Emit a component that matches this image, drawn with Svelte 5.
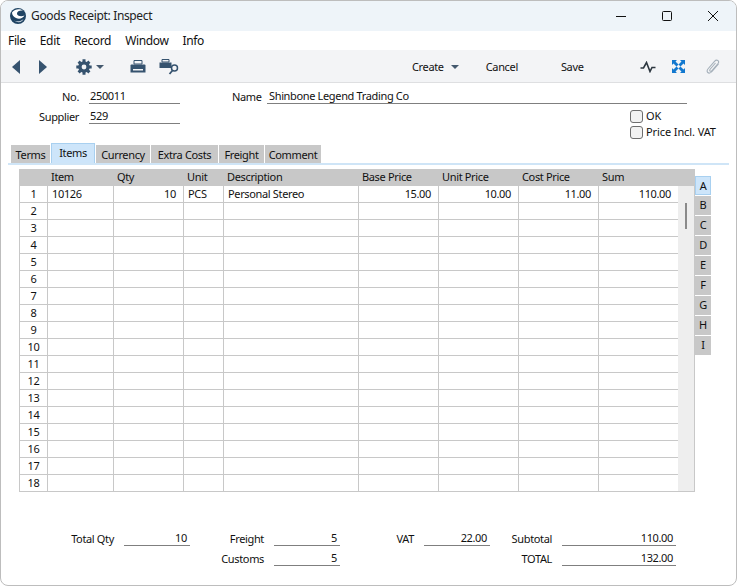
<script>
  const menus = ["File", "Edit", "Record", "Window", "Info"];
  const tabs = [
    { label: "Terms", width: 39 },
    { label: "Items", width: 44 },
    { label: "Currency", width: 54 },
    { label: "Extra Costs", width: 67 },
    { label: "Freight", width: 45 },
    { label: "Comment", width: 56 }
  ];
  const sideTabs = ["A", "B", "C", "D", "E", "F", "G", "H", "I"];
  const cols = ["", "Item", "Qty", "Unit", "Description", "Base Price", "Unit Price", "Cost Price", "Sum"];
  const first = ["1", "10126", "10", "PCS", "Personal Stereo", "15.00", "10.00", "11.00", "110.00"];
  const rows = Array.from({ length: 18 }, (_, i) =>
    i === 0 ? first : [String(i + 1), "", "", "", "", "", "", "", ""]
  );
</script>

<div class="window">
  <header class="titlebar">
    <svg class="logo" width="18" height="18" viewBox="0 0 18 18">
      <circle cx="9" cy="9" r="8" fill="#1f4363" />
      <path d="M3 5.500C6 1.500 11 1.500 14 3.500 11 3 8 4 8 6.500 8 9 12 10 15.500 8.500 14 11.500 10 12.500 7 11 4.500 9.800 3 8 3 5.500Z" fill="#fff" />
      <path d="M5 13.500C8 15 12 14.500 14.500 12 13.500 15 9 16.500 5 13.500Z" fill="#cfdbe6" />
    </svg>
    <span class="title">Goods Receipt: Inspect</span>
    <div class="winbtns">
      <svg width="12" height="12" viewBox="0 0 12 12"><path d="M1 6.500H11" stroke="#111" stroke-width="1" /></svg>
      <svg width="12" height="12" viewBox="0 0 12 12"><rect x="1.500" y="1.500" width="9" height="9" rx="1" fill="none" stroke="#111" /></svg>
      <svg width="12" height="12" viewBox="0 0 12 12"><path d="M1 1L11 11M11 1L1 11" stroke="#111" stroke-width="1" /></svg>
    </div>
  </header>

  <nav class="menubar">
    {#each menus as m}<span>{m}</span>{/each}
  </nav>

  <div class="toolbar">
    <svg class="nav-arrow" width="8" height="14" viewBox="0 0 8 14"><path d="M8 0V14L0 7Z" fill="#36536f" /></svg>
    <svg class="nav-arrow next" width="8" height="14" viewBox="0 0 8 14"><path d="M0 0V14L8 7Z" fill="#36536f" /></svg>
    <svg class="gear" width="16" height="16" viewBox="0 0 16 16">
      <circle cx="8" cy="8" r="5.800" fill="#36536f" />
      <path d="M8 0.300V15.700M0.300 8H15.700M2.600 2.600L13.400 13.400M13.400 2.600L2.600 13.400" stroke="#36536f" stroke-width="3" />
      <circle cx="8" cy="8" r="2.400" fill="#f3f4f6" />
    </svg>
    <span class="caret dark gear-caret"></span>
    <svg class="printer" width="16" height="14" viewBox="0 0 16 14">
      <path d="M4 0.500H12V4H4Z" fill="none" stroke="#36536f" />
      <path d="M1.500 4.500H14.500Q15.500 4.500 15.500 5.500V12.500H0.500V5.500Q0.500 4.500 1.500 4.500Z" fill="#36536f" />
      <rect x="3" y="9" width="10" height="1.500" fill="#f3f4f6" />
    </svg>
    <svg class="preview" width="21" height="16" viewBox="0 0 21 16">
      <path d="M3 0.500H10V3H3Z" fill="none" stroke="#36536f" />
      <path d="M0.500 3.500H12.500V9H0.500Z" fill="#36536f" />
      <circle cx="15.500" cy="9" r="3" fill="none" stroke="#36536f" stroke-width="1.500" />
      <path d="M13.500 11.500L10.500 15" stroke="#36536f" stroke-width="1.800" />
    </svg>
    <div class="actions">
      <span class="create">Create</span>
      <span class="caret"></span>
      <span class="cancel">Cancel</span>
      <span class="save">Save</span>
    </div>
    <svg class="pulse" width="16" height="12" viewBox="0 0 16 12"><path d="M0.500 7H3.500L6.500 1.500 10 10.500 12 6.500H15.500" fill="none" stroke="#2d3740" stroke-width="1.600" /></svg>
    <svg class="expand" width="13" height="13" viewBox="0 0 13 13">
      <path d="M0 0H5L3.500 1.500 6.500 4.500 4.500 6.500 1.500 3.500 0 5ZM13 0V5L11.500 3.500 8.500 6.500 6.500 4.500 9.500 1.500 8 0ZM0 13V8L1.500 9.500 4.500 6.500 6.500 8.500 3.500 11.500 5 13ZM13 13H8L9.500 11.500 6.500 8.500 8.500 6.500 11.500 9.500 13 8Z" fill="#1278cf" />
    </svg>
    <svg class="clip" width="14" height="16" viewBox="0 0 14 16">
      <path d="M12.500 5L6 12.500C4.500 14.200 2.800 14.500 1.800 13.500 0.800 12.500 1 11 2.300 9.500L8.500 2.300C9.700 1 11 0.800 12 1.600 13 2.500 12.800 3.700 11.800 4.900L6 11.500C5.300 12.300 4.500 12.400 4 12 3.500 11.500 3.700 10.800 4.300 10L9.500 4" fill="none" stroke="#a5b0ba" stroke-width="1.100" />
    </svg>
  </div>

  <section class="head">
    <div class="head-left">
      <div class="field"><span class="lbl">No.</span><span class="val short">250011</span></div>
      <div class="field"><span class="lbl">Supplier</span><span class="val short">529</span></div>
    </div>
    <div class="field name-field"><span class="lbl name-lbl">Name</span><span class="val name">Shinbone Legend Trading Co</span></div>
  </section>
  <div class="checks">
    <div class="check"><span class="box"></span>OK</div>
    <div class="check"><span class="box"></span>Price Incl. VAT</div>
  </div>

  <div class="tabs">
    {#each tabs as t, i}
      <div class="tab" class:active={i === 1} style:width="{t.width}px">{t.label}</div>
    {/each}
  </div>

  <div class="matrix-wrap">
    <div class="matrix">
      <div class="row header">
        {#each cols as c}<div class="cell">{c}</div>{/each}
      </div>
      <div class="scrolltrack"><span class="thumb"></span></div>
      {#each rows as r}
        <div class="row">
          {#each r as v, i}
            <div class="cell" class:num={i === 0} class:right={i === 2 || i > 4}>{v}</div>
          {/each}
        </div>
      {/each}
    </div>
    <div class="side">
      {#each sideTabs as s, i}
        <div class="sidetab" class:active={i === 0}>{s}</div>
      {/each}
    </div>
  </div>

  <footer class="totals">
    <div class="tcol c1">
      <div class="field"><span class="lbl">Total Qty</span><span class="val r">10</span></div>
    </div>
    <div class="tcol c2">
      <div class="field"><span class="lbl">Freight</span><span class="val r">5</span></div>
      <div class="field"><span class="lbl">Customs</span><span class="val r">5</span></div>
    </div>
    <div class="tcol c3">
      <div class="field"><span class="lbl">VAT</span><span class="val r">22.00</span></div>
    </div>
    <div class="tcol c4">
      <div class="field"><span class="lbl">Subtotal</span><span class="val r wide">110.00</span></div>
      <div class="field"><span class="lbl">TOTAL</span><span class="val r wide">132.00</span></div>
    </div>
  </footer>
</div>

<style>
  :global(body) {
    margin: 0;
    background: #fff;
  }

  .window {
    box-sizing: border-box;
    width: 737px;
    height: 586px;
    background: #fff;
    border: 1px solid #bdbdbd;
    border-radius: 8px;
    overflow: hidden;
    font-family: "Noto Sans", "Open Sans", sans-serif;
    font-size: 11px;
    line-height: 14px;
    letter-spacing: -0.35px;
    color: #111;
  }

  .titlebar {
    height: 30px;
    background: #eef4f9;
    display: flex;
    align-items: center;
    padding-left: 8px;
  }

  .logo {
    flex: none;
  }

  .title {
    margin-left: 4px;
    font-size: 12px;
    color: #222;
  }

  .winbtns {
    margin-left: auto;
    display: flex;
    gap: 34px;
    padding-right: 17px;
  }

  .menubar {
    height: 19px;
    display: flex;
    align-items: center;
    gap: 14px;
    padding-left: 7px;
    font-size: 12px;
  }

  .toolbar {
    box-sizing: border-box;
    height: 33px;
    background: #f3f4f6;
    border-bottom: 1px solid #dedfe1;
    display: flex;
    align-items: center;
    padding: 1px 0 0 11px;
  }

  .next {
    margin-left: 19px;
  }

  .gear {
    margin-left: 29px;
  }

  .caret {
    width: 0;
    height: 0;
    border-left: 4px solid transparent;
    border-right: 4px solid transparent;
    border-top: 4px solid #44596e;
    margin-left: 7px;
  }

  .gear-caret {
    margin-left: 4px;
  }

  .printer {
    margin-left: 26px;
  }

  .preview {
    margin-left: 13px;
  }

  .actions {
    display: flex;
    align-items: center;
    margin-left: 232px;
    width: 228px;
  }

  .cancel {
    margin-left: 27px;
  }

  .save {
    margin-left: 43px;
  }

  .expand {
    margin-left: 16px;
  }

  .clip {
    margin-left: 21px;
  }

  .head {
    display: flex;
    padding-top: 3px;
    height: 43px;
  }

  .head-left {
    display: flex;
    flex-direction: column;
    gap: 2px;
  }

  .field {
    display: flex;
    align-items: flex-end;
    height: 18px;
  }

  .lbl {
    text-align: right;
  }

  .head-left .lbl {
    width: 78px;
  }

  .val {
    display: block;
    box-sizing: border-box;
    border-bottom: 1px solid #7f7f7f;
    height: 15px;
    padding: 0 1px;
    white-space: nowrap;
  }

  .short {
    width: 91px;
    margin-left: 10px;
  }

  .name-field {
    margin-left: 52px;
  }

  .name-lbl {
    width: 27px;
  }

  .name {
    width: 420px;
    margin-left: 8px;
    padding-left: 2px;
  }

  .checks {
    position: relative;
    height: 0;
  }

  .check {
    position: absolute;
    left: 629px;
    top: -21px;
    display: flex;
    align-items: center;
    gap: 3px;
    height: 16px;
    white-space: nowrap;
    letter-spacing: -0.1px;
  }

  .check + .check {
    top: -5px;
  }

  .box {
    box-sizing: border-box;
    width: 13px;
    height: 13px;
    border: 1px solid #6e6e6e;
    border-radius: 3px;
    background: #f2f2f2;
  }

  .tabs {
    display: flex;
    align-items: flex-end;
    gap: 1px;
    margin: 14px 7px 0 7px;
    padding-left: 3px;
    height: 20px;
    border-bottom: 2px solid #cfe5f7;
  }

  .tab {
    box-sizing: border-box;
    height: 18px;
    line-height: 19px;
    text-align: center;
    background: #c8c8c8;
  }

  .tab.active {
    height: 20px;
    line-height: 18px;
    background: #cde5fa;
    border: 1px solid #a8d0f0;
    border-bottom: none;
  }

  .matrix-wrap {
    display: flex;
    align-items: flex-start;
    margin: 4px 0 0 18px;
  }

  .matrix {
    position: relative;
    width: 676px;
    box-sizing: border-box;
    border-left: 1px solid #c8c8c8;
    border-right: 1px solid #c8c8c8;
    border-bottom: 1px solid #c8c8c8;
    display: flex;
    flex-direction: column;
  }

  .row {
    display: grid;
    grid-template-columns: 28px 66px 70px 40px 135px 80px 80px 80px 79px;
    height: 17px;
    width: 658px;
    box-sizing: border-box;
    border-bottom: 1px solid #c8c8c8;
  }

  .row:last-child {
    border-bottom: none;
    height: 16px;
  }

  .cell {
    box-sizing: border-box;
    border-right: 1px solid #c8c8c8;
    padding: 0 4px;
    line-height: 16px;
    white-space: nowrap;
  }

  .cell:last-child {
    border-right: none;
  }

  .num {
    text-align: center;
  }

  .right {
    text-align: right;
    padding-right: 7px;
  }

  .row.header {
    width: 674px;
    height: 17px;
    background: #c8c8c8;
    border-bottom: none;
    grid-template-columns: 28px 66px 70px 40px 135px 80px 80px 80px 95px;
  }

  .row.header .cell {
    border-right: none;
    padding-left: 3px;
  }

  .scrolltrack {
    position: absolute;
    top: 17px;
    right: 0;
    bottom: 0;
    width: 16px;
    background: #eeeeee;
  }

  .thumb {
    position: absolute;
    left: 7px;
    top: 17px;
    width: 2px;
    height: 26px;
    background: #8a8a8a;
  }

  .side {
    margin-top: 7px;
    display: flex;
    flex-direction: column;
  }

  .sidetab {
    box-sizing: border-box;
    width: 16px;
    height: 19px;
    margin-bottom: 1px;
    background: #c8c8c8;
    text-align: center;
    line-height: 18px;
  }

  .sidetab.active {
    background: #cde5fa;
    border: 1px solid #a8d0f0;
  }

  .totals {
    display: flex;
    margin-top: 36px;
  }

  .tcol {
    display: flex;
    flex-direction: column;
    gap: 2px;
  }

  .r {
    text-align: right;
    width: 66px;
    margin-left: 10px;
    padding-right: 3px;
  }

  .r.wide {
    width: 114px;
  }

  .c1 .lbl {
    width: 113px;
  }

  .c2 .lbl,
  .c3 .lbl {
    width: 74px;
  }

  .c4 .lbl {
    width: 62px;
  }
</style>
